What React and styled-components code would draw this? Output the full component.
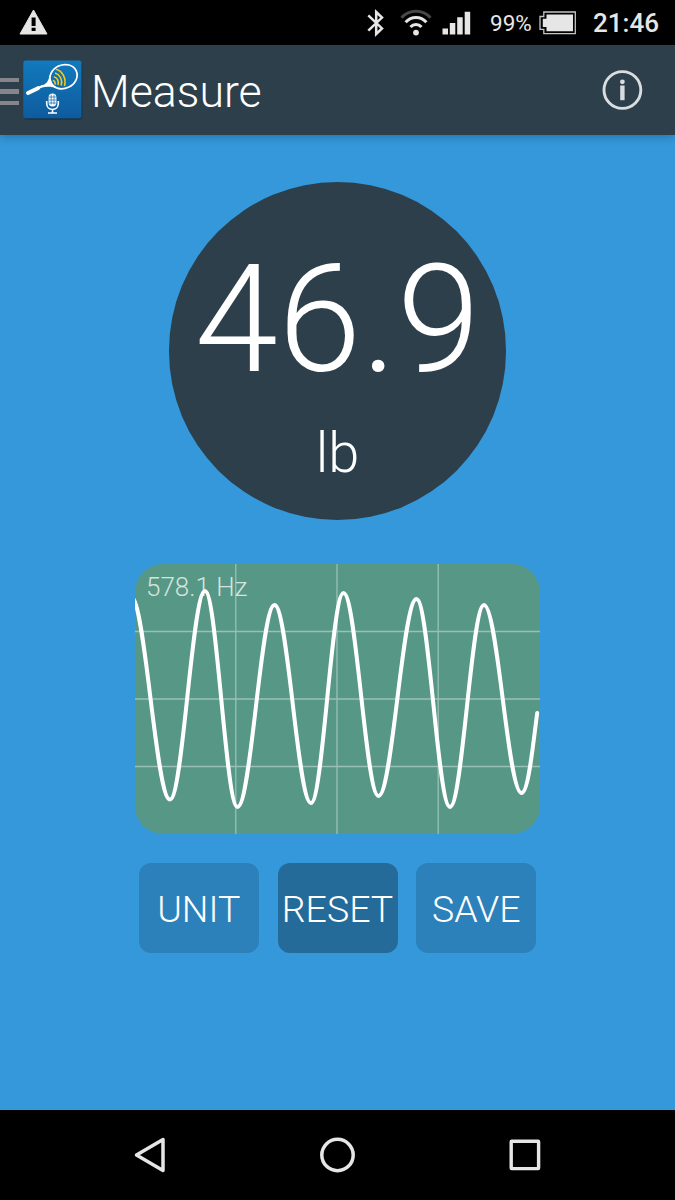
import styled, { createGlobalStyle } from "styled-components";

// Turning points of the recorded wave, in chart units
const WAVE = [
  [-3.5, 33],
  [35.5, 235.5],
  [70.5, 27],
  [103, 243],
  [140, 41],
  [176.5, 239],
  [209, 29],
  [244, 232],
  [282, 35],
  [315.5, 243],
  [349.5, 41],
  [387, 229],
];

const wavePath = (points) =>
  points.reduce((path, [x, y], i) => {
    if (i === 0) return `M${x} ${y}`;
    const [px, py] = points[i - 1];
    const k = (x - px) * 0.3642;
    return `${path} C${px + k} ${py} ${x - k} ${y} ${x} ${y}`;
  }, "");

const StatusBar = () => (
  <Status>
    <WarningIcon width="29" height="27" viewBox="0 0 29 27">
      <path d="M14.5 1 28 25H1Z" fill="#e6e6e6" stroke="#e6e6e6" strokeLinejoin="round" />
      <path d="M12.6 8.5h4v8.6h-4zM12.6 18.7h4v3.2h-4z" fill="#000" />
    </WarningIcon>
    <BluetoothIcon width="18" height="28" viewBox="0 0 18 28">
      <path
        d="M1.3 6.3 15 19.4 9.2 25V3L15 8.6 1.3 21.7"
        fill="none"
        stroke="#e6e6e6"
        strokeWidth="2.5"
      />
    </BluetoothIcon>
    <WifiIcon width="32" height="28" viewBox="0 0 32 28" fill="none" strokeWidth="3">
      <path d="M1.5 8.8C9.5.2 22.5.2 30.5 8.8" stroke="#474747" />
      <path d="M5.6 13.2C11.4 6.9 20.6 6.9 26.4 13.2" stroke="#e6e6e6" />
      <path d="M10.5 18C13.5 14.7 18.5 14.7 21.5 18" stroke="#e6e6e6" />
      <circle cx="16" cy="23.6" r="2.9" fill="#e6e6e6" />
    </WifiIcon>
    <SignalIcon width="29" height="24" viewBox="0 0 29 24">
      <path
        d="M.5 17.5H6v6H.5zM7.8 12h5.5v11.5H7.8zM15.2 6.3h5.5v17.2h-5.5zM22.7.7h5.5v22.8h-5.5z"
        fill="#e6e6e6"
      />
    </SignalIcon>
    <Percent>99%</Percent>
    <BatteryIcon width="38" height="24" viewBox="0 0 38 24">
      <path d="M4.8 1H36.3V22.7H4.8V18.3H1V5.5H4.8Z" fill="none" stroke="#c4c4c4" strokeWidth="1.3" />
      <path d="M7.5 3.5H34V20.3H7.5V16H3.8V7.7H7.5Z" fill="#e6e6e6" />
    </BatteryIcon>
    <Clock>21:46</Clock>
  </Status>
);

const AppLogo = () => (
  <Logo width="60" height="60" viewBox="0 0 60 60">
    <defs>
      <linearGradient id="logoFill" x1="0" y1="0" x2="0" y2="1">
        <stop offset="0" stopColor="#117abd" />
        <stop offset="1" stopColor="#0e5b9e" />
      </linearGradient>
    </defs>
    <rect x="1" y="1.5" width="58.5" height="58.3" rx="3" fill="#183548" />
    <rect x=".3" y=".5" width="58.2" height="57.8" rx="2.5" fill="url(#logoFill)" />
    <g fill="none" stroke="#fff">
      <ellipse cx="40.5" cy="16.7" rx="14" ry="11.7" transform="rotate(-25 40.5 16.7)" strokeWidth="1.7" />
      <path d="M5 33 15 28.2" strokeWidth="4" strokeLinecap="round" />
      <path d="M15.5 28 20 25.7" strokeWidth="2.3" />
    </g>
    <path d="M18 26C23 24.5 25.500 21.500 26.500 15.500L28.200 20.500C29.500 24.700 31.500 26.500 36 28.200C29.500 26.800 23.500 26 19 27.500Z" fill="#fff" />
    <g fill="none" stroke="#f6c915" strokeWidth="1.6">
      <path d="M33 9.2C39.500 11 43.500 18 41.500 26" />
      <path d="M32 13C37 14.500 40 20 38.200 25.500" />
      <path d="M30.800 16.800C34 17.500 36.200 21 35 25" />
      <path d="M29.800 20.500C31.500 20.800 32.600 22.500 32 24.500" />
    </g>
    <rect x="25.6" y="33.5" width="7.8" height="13" rx="3.9" fill="#fff" />
    <path d="M26 37h7M26 40h7M26 43h7M28.2 34.5v10M31 34.5v10" stroke="#1469ac" strokeWidth=".7" />
    <path d="M23.7 41v2.5c0 8 11.6 8 11.6 0V41M29.5 49.5v3M25 53h9" fill="none" stroke="#fff" strokeWidth="1.6" />
  </Logo>
);

const Header = () => (
  <AppBar>
    <Drawer>
      <DrawerLine />
      <DrawerLine />
      <DrawerLine />
    </Drawer>
    <AppLogo />
    <Title>Measure</Title>
    <svg width="42" height="42" viewBox="0 0 42 42">
      <circle cx="21.4" cy="21" r="18.4" fill="none" stroke="#dadde0" strokeWidth="2.9" />
      <circle cx="21.4" cy="12.8" r="2.4" fill="#dadde0" />
      <path d="M19.2 16.5h4.400v14.700h-4.400z" fill="#dadde0" />
    </svg>
  </AppBar>
);

const WaveChart = ({ frequency }) => (
  <Chart>
    <Frequency>{frequency}</Frequency>
    <Plot width="405" height="270" viewBox="0.5 0 405 270">
      <path
        d="M101.3 0V270M202.5 0V270M303.7 0V270M0 67.500H406M0 135H406M0 202.500H406"
        stroke="#fff"
        strokeOpacity=".4"
        strokeWidth="1.3"
      />
      <path
        d={`${wavePath(WAVE)} C394 229 398.5 180 402.7 149`}
        fill="none"
        stroke="#fff"
        strokeWidth="4"
        strokeLinecap="round"
      />
    </Plot>
  </Chart>
);

const App = () => {
  return (
    <>
      <GlobalStyle />
      <Screen>
        <StatusBar />
        <Header />
        <Content>
          <Gauge>
            <Value>46.9</Value>
            <Unit>lb</Unit>
          </Gauge>
          <WaveChart frequency="578.1 Hz" />
          <Actions>
            <Button>UNIT</Button>
            <Button $active>RESET</Button>
            <Button>SAVE</Button>
          </Actions>
        </Content>
        <NavBar>
          <svg width="32" height="36" viewBox="0 0 32 36">
            <path d="M29 2.5V33.5L2.5 18Z" fill="none" stroke="#e6e6e6" strokeWidth="3.5" strokeLinejoin="round" />
          </svg>
          <svg width="36" height="36" viewBox="0 0 36 36">
            <circle cx="17.5" cy="18" r="15.7" fill="none" stroke="#e6e6e6" strokeWidth="3.5" />
          </svg>
          <svg width="32" height="32" viewBox="0 0 32 32">
            <rect x="2.2" y="2.2" width="27.4" height="27.4" rx=".5" fill="none" stroke="#e6e6e6" strokeWidth="3.4" />
          </svg>
        </NavBar>
      </Screen>
    </>
  );
};

export default App;

// Styles
const GlobalStyle = createGlobalStyle`
  * {
    box-sizing: border-box;
  }

  body {
    margin: 0;
    font-family: Roboto, "Liberation Sans", sans-serif;
  }

  svg {
    display: block;
    flex-shrink: 0;
  }
`;

const Screen = styled.div`
  display: flex;
  flex-direction: column;
  width: 675px;
  height: 1200px;
  overflow: hidden;
  background: #3498db;
`;

const Status = styled.div`
  display: flex;
  align-items: center;
  height: 45px;
  padding-left: 19px;
  background: #000;
  color: #e6e6e6;
  white-space: nowrap;
`;

const WarningIcon = styled.svg`
  margin-right: auto;
`;

const BluetoothIcon = styled.svg`
  margin-right: 15px;
`;

const WifiIcon = styled.svg`
  margin-right: 10px;
`;

const SignalIcon = styled.svg`
  margin-right: 19px;
`;

const Percent = styled.span`
  width: 49px;
  font-size: 22.5px;
  line-height: 45px;
  padding-top: 2px;
`;

const BatteryIcon = styled.svg`
  margin-right: 16px;
`;

const Clock = styled.span`
  width: 82px;
  font-size: 26px;
  font-weight: 500;
  line-height: 45px;
  padding-top: 2px;
`;

const AppBar = styled.header`
  display: flex;
  align-items: center;
  height: 90px;
  padding-right: 32px;
  background: #2c3f4a;
  box-shadow: 0 2px 9px rgba(0, 0, 0, 0.25);
`;

const Drawer = styled.div`
  display: flex;
  flex-direction: column;
  gap: 7px;
  width: 19px;
  margin-right: 4px;
  padding-top: 3px;
`;

const DrawerLine = styled.div`
  height: 4.3px;
  background: #86868a;
`;

const Logo = styled.svg`
  margin-right: 8px;
`;

const Title = styled.h1`
  flex: 1;
  margin: 0;
  padding-top: 3px;
  color: #fff;
  font-size: 44.7px;
  font-weight: 300;
`;

const Content = styled.main`
  display: flex;
  flex: 1;
  flex-direction: column;
  align-items: center;
  padding-top: 47px;
`;

const Gauge = styled.div`
  display: flex;
  flex-direction: column;
  align-items: center;
  width: 337.5px;
  height: 337.5px;
  margin-bottom: 44.5px;
  border-radius: 50%;
  background: #2c3f4a;
  color: #fff;
  font-weight: 300;
  white-space: nowrap;
`;

const Value = styled.div`
  margin-top: 50px;
  font-size: 150px;
  line-height: 176px;
`;

const Unit = styled.div`
  margin-top: 12px;
  font-size: 56px;
  line-height: 66px;
`;

const Chart = styled.div`
  display: grid;
  width: 405px;
  height: 270px;
  margin-bottom: 28.5px;
  overflow: hidden;
  border-radius: 28px;
  background: #569785;
`;

const Frequency = styled.span`
  grid-area: 1 / 1;
  padding: 8px 0 0 11px;
  color: rgba(255, 255, 255, 0.75);
  font-size: 26px;
  font-weight: 300;
`;

const Plot = styled.svg`
  grid-area: 1 / 1;
`;

const Actions = styled.div`
  display: flex;
  gap: 18.75px;
`;

const Button = styled.button`
  display: flex;
  align-items: center;
  justify-content: center;
  width: 120px;
  height: 90px;
  padding: 2px 0 0;
  border: none;
  border-radius: 12px;
  background: ${({ $active }) => ($active ? "#256b9a" : "#2c81ba")};
  color: #fff;
  font-family: inherit;
  font-size: 37.5px;
  font-weight: 300;
`;

const NavBar = styled.nav`
  display: flex;
  align-items: center;
  justify-content: space-between;
  height: 90px;
  padding: 0 134px;
  background: #000;
`;
